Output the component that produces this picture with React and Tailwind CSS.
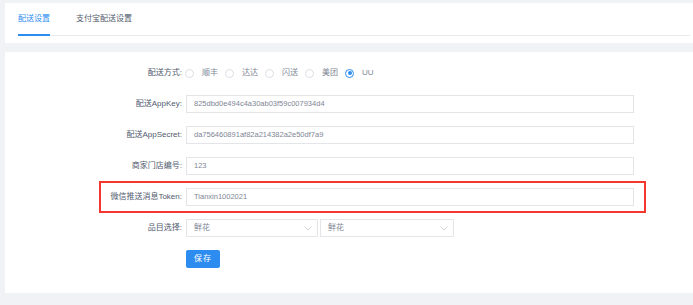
import React, { useState } from 'react';

const font = { fontFamily: '"Liberation Sans", "Noto Sans CJK SC", sans-serif' };

const Radio = ({ label, checked, onClick }) => (
  <label onClick={onClick} className="flex items-center mr-[7px] cursor-pointer">
    <span
      className={`w-[9px] h-[9px] rounded-full border flex items-center justify-center mr-[8px] bg-white ${
        checked ? 'border-[#2d8cf0]' : 'border-[#dcdee2]'
      }`}
    >
      {checked && <span className="w-[4px] h-[4px] rounded-full bg-[#2d8cf0]" />}
    </span>
    <span className="text-[#808695]">{label}</span>
  </label>
);

const Row = ({ label, children, extra }) => (
  <div className="relative flex items-center h-[18px] mb-[13px]">
    {extra}
    <div className="w-[181px] pr-[4px] text-right text-[#515a6e] shrink-0">{label}</div>
    {children}
  </div>
);

const Input = ({ value }) => (
  <div className="w-[448px] h-[18px] border border-[#e3e5e8] flex items-center pl-[7px] text-[#808695] text-[7.5px] bg-white">
    {value}
  </div>
);

const Chevron = () => (
  <svg width="8" height="5" viewBox="0 0 8 5" className="mr-[5px]">
    <path d="M0.5 0.5 L4 4 L7.5 0.5" fill="none" stroke="#c5c8ce" strokeWidth="0.8" />
  </svg>
);

const Select = ({ value, w }) => (
  <div className={`${w} h-[18px] border border-[#e3e5e8] flex items-center justify-between pl-[7px] text-[#808695] bg-white`}>
    <span>{value}</span>
    <Chevron />
  </div>
);

export default function App() {
  const [tab, setTab] = useState(0);
  const [way, setWay] = useState('UU');
  const ways = ['顺丰', '达达', '闪送', '美团', 'UU'];

  return (
    <div style={font} className="w-[693px] h-[305px] bg-[#f0f2f5] pt-[3px] pl-[5px] text-[8px] leading-none overflow-hidden">
      <div className="bg-white h-[40px] pl-[13px] pr-[3px] flex flex-col justify-end">
        <div className="flex border-b border-[#e8eaec] mb-[7px]">
          {['配送设置', '支付宝配送设置'].map((t, i) => (
            <div
              key={t}
              onClick={() => setTab(i)}
              className={`pb-[11px] mr-[26px] border-b-2 -mb-px cursor-pointer ${
                tab === i ? 'text-[#2d8cf0] border-[#2d8cf0]' : 'text-[#515a6e] border-transparent'
              }`}
            >
              {t}
            </div>
          ))}
        </div>
      </div>

      <div className="bg-white mt-[9px] h-[241px] pt-[12px]">
        <Row label="配送方式:">
          <div className="flex items-center ml-[-1px]">
            {ways.map((w) => (
              <Radio key={w} label={w} checked={way === w} onClick={() => setWay(w)} />
            ))}
          </div>
        </Row>
        <Row label="配送AppKey:">
          <Input value="825dbd0e494c4a30ab03f59c007934d4" />
        </Row>
        <Row label="配送AppSecret:">
          <Input value="da756460891af82a214382a2e50df7a9" />
        </Row>
        <Row label="商家门店编号:">
          <Input value="123" />
        </Row>
        <Row
          label="微信推送消息Token:"
          extra={<div className="absolute left-[94px] top-[-7px] w-[547px] h-[32px] border-2 border-[#f5382f] pointer-events-none" />}
        >
          <Input value="Tianxin1002021" />
        </Row>
        <Row label="品目选择:">
          <div className="flex gap-[2px]">
            <Select value="鲜花" w="w-[132px]" />
            <Select value="鲜花" w="w-[134px]" />
          </div>
        </Row>
        <div className="flex pl-[181px]">
          <button className="w-[34px] h-[18px] bg-[#2d8cf0] text-white rounded-[2px] text-[8px] tracking-[1px]">
            保存
          </button>
        </div>
      </div>
    </div>
  );
}
